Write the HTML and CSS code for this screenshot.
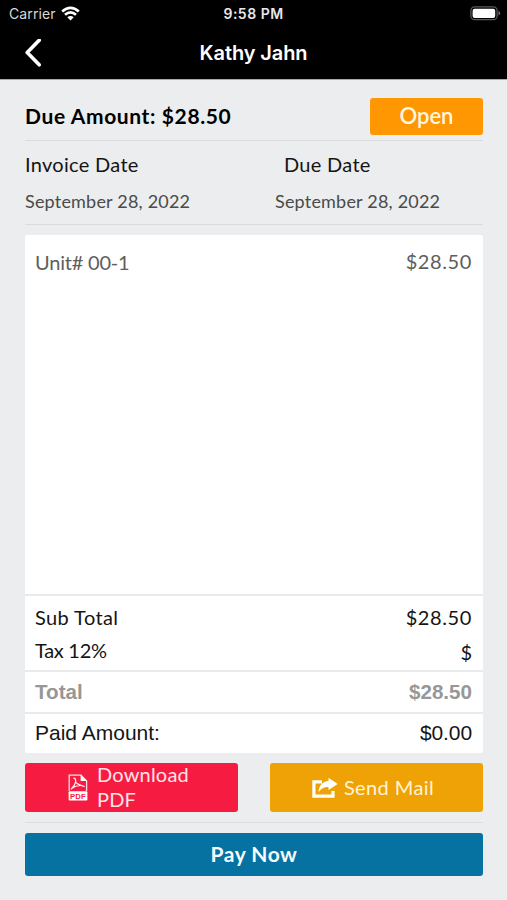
FILE: index.html
```html
<!DOCTYPE html>
<html lang="en">
  <head>
    <meta charset="UTF-8" />
    <meta name="viewport" content="width=device-width, initial-scale=1.0" />
    <title>Invoice</title>
    <link rel="stylesheet" href="styles.css">
  </head>
  <body>
    <header>
      <div class="status-bar">
        <div class="carrier">
          <span>Carrier</span>
          <svg class="wifi" width="19" height="15" viewBox="0 0 19 15" fill="none" stroke="#fff" stroke-width="2.7">
            <path d="M1.2 5.6Q9.5 -2 17.8 5.6" />
            <path d="M4 8.8Q9.5 4 15 8.8" />
            <path d="M6.3 11.2Q9.5 8.6 12.7 11.2L9.5 14.4Z" fill="#fff" stroke="none" />
          </svg>
        </div>
        <span class="time">9:58 PM</span>
        <svg class="battery" width="31" height="15" viewBox="0 0 31 15">
          <rect x="0.9" y="0.9" width="26.2" height="12.8" rx="3.8" fill="none" stroke="#59595b" stroke-width="1.3" />
          <rect x="2.6" y="2.7" width="22.6" height="9.2" rx="2" fill="#fff" />
          <path d="M28.5 5v4.6q1.6-.6 1.6-2.3T28.5 5z" fill="#77777a" />
        </svg>
      </div>
      <div class="nav-bar">
        <a class="back" href="#">
          <svg width="18" height="29" viewBox="0 0 18 29" fill="none" stroke="#fff" stroke-width="3.6" stroke-linecap="round" stroke-linejoin="round">
            <path d="M15.2 1.2L3.2 13.6L15.2 25.8" />
          </svg>
        </a>
        <h1 class="title">Kathy Jahn</h1>
      </div>
    </header>

    <main class="content">
      <div class="due-row">
        <h2 class="due-amount">Due Amount: $28.50</h2>
        <span class="status">Open</span>
      </div>

      <div class="dates">
        <div class="date">
          <div class="date-label">Invoice Date</div>
          <div class="date-value">September 28, 2022</div>
        </div>
        <div class="date due">
          <div class="date-label">Due Date</div>
          <div class="date-value">September 28, 2022</div>
        </div>
      </div>

      <div class="card">
        <div class="items">
          <div class="row item">
            <span class="item-name">Unit# 00-1</span>
            <span class="item-price">$28.50</span>
          </div>
        </div>
        <div class="sub-totals">
          <div class="row">
            <span class="sub-label">Sub Total</span>
            <span class="sub-value">$28.50</span>
          </div>
          <div class="row">
            <span class="tax-label">Tax 12%</span>
            <span class="tax-value">$</span>
          </div>
        </div>
        <div class="row total">
          <span class="total-label">Total</span>
          <span class="total-value">$28.50</span>
        </div>
        <div class="row paid">
          <span class="paid-label">Paid Amount:</span>
          <span class="paid-value">$0.00</span>
        </div>
      </div>

      <div class="actions">
        <button class="button download">
          <svg width="20" height="27" viewBox="0 0 20 27">
            <path d="M1.2 17V1.2H13L18.6 7V17" fill="none" stroke="#fff" stroke-opacity=".85" stroke-width="1.3" />
            <path d="M12.6 .8V7H19z" fill="#fff" />
            <path d="M5.4 4.4C7.6 3.6 7.8 6.4 7.6 8.2C9.2 10.6 12.8 11.4 16.6 12.6M7.6 8.2C7 11 5 13.4 3 15.4M3.6 14.4C6.4 12.2 9.6 11.4 12.4 11.3" fill="none" stroke="#fff" stroke-opacity=".9" stroke-width="1.3" />
            <rect x=".6" y="17.2" width="18.8" height="9.2" rx="1" fill="#fff" />
            <text class="pdf-text" x="10" y="24.8" text-anchor="middle" textLength="16" lengthAdjust="spacingAndGlyphs">PDF</text>
          </svg>
          <span>Download PDF</span>
        </button>
        <button class="button mail">
          <svg width="26" height="22" viewBox="0 0 26 22">
            <path d="M10 4.8H1.9V19.2H21V14" fill="none" stroke="#fff" stroke-width="3.2" />
            <path d="M16.5 0.8L25.6 6.9L16.5 13V9.9C12.5 9.7 9.3 11 6.6 15.2C6.8 8.5 10.8 4.4 16.5 4z" fill="#fff" />
          </svg>
          <span>Send Mail</span>
        </button>
      </div>

      <button class="button pay">Pay Now</button>
    </main>
  </body>
</html>
```

FILE: styles.css
```css
* {
  box-sizing: border-box;
}

body {
  font-family: Lato, "Open Sans", sans-serif;
  margin: 0;
  background-color: #ebedee;
  color: #151515;
}

header {
  height: 80px;
  background-color: #000;
  color: white;
  border-bottom: 1px solid #a9aaab;
  font-family: Inter, sans-serif;
}

.status-bar {
  height: 27px;
  padding: 0 6px 0 9px;
  display: grid;
  grid-template-columns: 1fr auto 1fr;
  align-items: center;
  font-size: 14px;
  line-height: 27px;
}

.carrier {
  display: flex;
  align-items: center;
  gap: 5px;
  color: #d8d8d8;
  letter-spacing: 0.1px;
}

.time {
  margin-right: 3px;
  font-weight: 600;
  letter-spacing: 0.5px;
  color: #e8e8e8;
}

.battery {
  justify-self: end;
}

.nav-bar {
  height: 52px;
  padding: 0 24px;
  display: grid;
  grid-template-columns: 1fr auto 1fr;
  align-items: center;
}

.back {
  display: flex;
}

.title {
  margin: 0;
  font-size: 20px;
  font-weight: 600;
  letter-spacing: -0.1px;
}

.content {
  padding: 0 24px 0 25px;
}

.due-row {
  height: 61px;
  padding-top: 13px;
  display: flex;
  align-items: center;
  justify-content: space-between;
  border-bottom: 1px solid #d9dbdc;
}

.due-amount {
  margin: -3px 0 0;
  font-size: 21px;
  font-weight: 700;
  letter-spacing: 0.62px;
  color: #000;
}

.status {
  width: 113px;
  height: 37px;
  border-radius: 3px;
  background-color: #ff9702;
  color: #fff6e0;
  font-size: 22px;
  font-weight: 600;
  line-height: 36px;
  text-align: center;
}

.dates {
  height: 84px;
  padding-top: 6px;
  display: grid;
  grid-template-columns: 250px 1fr;
  border-bottom: 1px solid #d9dbdc;
}

.date-label {
  font-size: 20px;
  line-height: 34px;
  letter-spacing: 0.3px;
}

.due .date-label {
  padding-left: 9px;
}

.date-value {
  font-size: 18px;
  line-height: 40px;
  letter-spacing: 0.2px;
  color: #4a4a4a;
}

.card {
  height: 518px;
  margin-top: 10px;
  border-radius: 2px;
  background-color: #fff;
  display: flex;
  flex-direction: column;
}

.row {
  padding: 0 11px 0 10px;
  display: flex;
  justify-content: space-between;
  font-size: 20px;
}

.items {
  flex: 1;
  padding-top: 10px;
  color: #5e5e5e;
}

.item {
  line-height: 34px;
}

.item-name {
  letter-spacing: -0.2px;
}

.item-price {
  margin-top: -1px;
}

.item-price,
.sub-value {
  letter-spacing: 0.6px;
}

.sub-totals {
  height: 76px;
  padding-top: 5px;
  border-top: 2px solid #e8eaeb;
  line-height: 33px;
}

.sub-label {
  letter-spacing: 0.4px;
}

.tax-label {
  letter-spacing: -0.3px;
}

.tax-value {
  margin-top: 2px;
}

.total {
  height: 42px;
  border-top: 2px solid #e8eaeb;
  font-family: "Liberation Sans", sans-serif;
  font-size: 20.6px;
  font-weight: 700;
  line-height: 39px;
  color: #979797;
}

.paid {
  height: 41px;
  border-top: 2px solid #e8eaeb;
  font-family: "Liberation Sans", sans-serif;
  font-size: 21px;
  line-height: 38px;
}

.paid-value {
  letter-spacing: -0.1px;
}

.actions {
  height: 70px;
  padding-top: 10px;
  display: grid;
  grid-template-columns: 213px 213px;
  justify-content: space-between;
  align-items: start;
  border-bottom: 1px solid #dcdedf;
}

.button {
  border: none;
  border-radius: 3px;
  padding: 0;
  display: flex;
  align-items: center;
  justify-content: center;
  font-family: inherit;
  font-size: 20px;
  cursor: pointer;
}

.download,
.mail {
  height: 49px;
}

.download {
  justify-content: flex-start;
  padding-left: 43px;
  gap: 9px;
  background-color: #f61c41;
  color: #ffe3e8;
  line-height: 25px;
  letter-spacing: 0.2px;
  text-align: left;
}

.download span {
  width: 100px;
  margin-top: -1px;
}

.pdf-text {
  font-family: "Liberation Sans", sans-serif;
  font-size: 8px;
  font-weight: 700;
  fill: #f61c41;
}

.mail {
  gap: 6px;
  padding-right: 7px;
  background-color: #efa205;
  color: #fff4d6;
  letter-spacing: 0.4px;
}

.mail span {
  margin-top: -2px;
}

.pay {
  width: 100%;
  height: 43px;
  margin-top: 10px;
  padding-bottom: 2px;
  background-color: #0672a1;
  color: #f4fafd;
  font-size: 21px;
  font-weight: 700;
  letter-spacing: 0.5px;
}
```
